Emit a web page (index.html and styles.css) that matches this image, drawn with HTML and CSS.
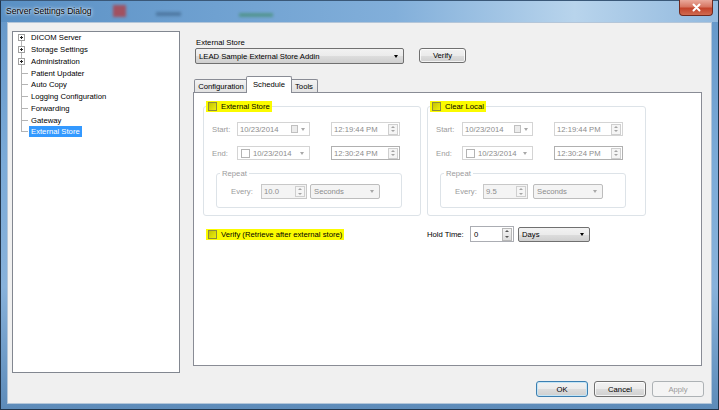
FILE: index.html
```html
<!DOCTYPE html>
<html>
<head>
<meta charset="utf-8">
<title>Server Settings Dialog</title>
<link rel="stylesheet" href="styles.css">
</head>
<body>
<div class="window">
  <div class="titlebar">
    <span class="title">Server Settings Dialog</span>
    <span class="ghost ghost-red"></span>
    <span class="ghost ghost-dark"></span>
    <span class="ghost ghost-green"></span>
    <span class="close"><svg width="11" height="9" viewBox="0 0 11 9"><path d="M2.5 1.5 L8.5 7.5 M8.5 1.5 L2.5 7.5" stroke="#fff" stroke-width="2" stroke-linecap="round"/></svg></span>
  </div>
  <div class="client">
    <div class="main">
      <ul class="tree">
        <li class="node"><span class="twig first"><i class="exp"></i></span><span class="lbl">DICOM Server</span></li>
        <li class="node"><span class="twig"><i class="exp"></i></span><span class="lbl">Storage Settings</span></li>
        <li class="node"><span class="twig"><i class="exp"></i></span><span class="lbl">Administration</span></li>
        <li class="node"><span class="twig leaf"></span><span class="lbl">Patient Updater</span></li>
        <li class="node"><span class="twig leaf"></span><span class="lbl">Auto Copy</span></li>
        <li class="node"><span class="twig leaf"></span><span class="lbl">Logging Configuration</span></li>
        <li class="node"><span class="twig leaf"></span><span class="lbl">Forwarding</span></li>
        <li class="node"><span class="twig leaf"></span><span class="lbl">Gateway</span></li>
        <li class="node"><span class="twig leaf last"></span><span class="lbl selected">External Store</span></li>
      </ul>
      <div class="pane">
        <div class="store-label">External Store</div>
        <div class="store-row">
          <div class="combo combo-store"><span>LEAD Sample External Store Addin</span><i class="arrow"></i></div>
          <div class="btn verify">Verify</div>
        </div>
        <div class="tabs">
          <div class="tab cfg">Configuration</div>
          <div class="tab sel">Schedule</div>
          <div class="tab tools">Tools</div>
        </div>
        <div class="panel">
          <div class="groups">
            <div class="group">
              <div class="legend"><i class="chk"></i><span>External Store</span></div>
              <div class="row">
                <span class="lab">Start:</span>
                <div class="date"><span>10/23/2014</span><i class="cal"></i><i class="arrow gray"></i></div>
                <div class="time"><span>12:19:44 PM</span><span class="spin"><i class="up"></i><i class="dn"></i></span></div>
              </div>
              <div class="row">
                <span class="lab">End:</span>
                <div class="date"><i class="minichk"></i><span class="dtxt">10/23/2014</span><i class="arrow gray"></i></div>
                <div class="time dark"><span>12:30:24 PM</span><span class="spin"><i class="up"></i><i class="dn"></i></span></div>
              </div>
              <div class="repeat">
                <div class="rleg">Repeat</div>
                <div class="every">
                  <span class="elab">Every:</span>
                  <div class="num"><span>10.0</span><span class="spin"><i class="up"></i><i class="dn"></i></span></div>
                  <div class="combo dis"><span>Seconds</span><i class="arrow gray"></i></div>
                </div>
              </div>
            </div>
            <div class="group right">
              <div class="legend"><i class="chk"></i><span>Clear Local</span></div>
              <div class="row">
                <span class="lab">Start:</span>
                <div class="date"><span>10/23/2014</span><i class="cal"></i><i class="arrow gray"></i></div>
                <div class="time"><span>12:19:44 PM</span><span class="spin"><i class="up"></i><i class="dn"></i></span></div>
              </div>
              <div class="row">
                <span class="lab">End:</span>
                <div class="date"><i class="minichk"></i><span class="dtxt">10/23/2014</span><i class="arrow gray"></i></div>
                <div class="time dark"><span>12:30:24 PM</span><span class="spin"><i class="up"></i><i class="dn"></i></span></div>
              </div>
              <div class="repeat">
                <div class="rleg">Repeat</div>
                <div class="every">
                  <span class="elab">Every:</span>
                  <div class="num"><span>9.5</span><span class="spin"><i class="up"></i><i class="dn"></i></span></div>
                  <div class="combo dis"><span>Seconds</span><i class="arrow gray"></i></div>
                </div>
              </div>
            </div>
          </div>
          <div class="bottom">
            <div class="vcell">
              <div class="legend flat"><i class="chk"></i><span>Verify (Retrieve after external store)</span></div>
            </div>
            <span class="hold-lab">Hold Time:</span>
            <div class="hold"><span>0</span><span class="spin en"><i class="up"></i><i class="dn"></i></span></div>
            <div class="combo days"><span>Days</span><i class="arrow"></i></div>
          </div>
        </div>
      </div>
    </div>
    <div class="buttons">
      <div class="btn default">OK</div>
      <div class="btn">Cancel</div>
      <div class="btn disabled">Apply</div>
    </div>
  </div>
</div>
</body>
</html>
```
FILE: styles.css
```css
* { box-sizing: border-box; margin: 0; padding: 0; }
html, body { width: 719px; height: 410px; overflow: hidden; background: #6d98c4; }
body { font-family: "Liberation Sans", Arial, sans-serif; font-size: 7.7px; color: #000; }

.window {
  width: 719px; height: 410px;
  display: flex; flex-direction: column;
  border: 1px solid #22354b; border-top-color: #3a5878;
  background: linear-gradient(180deg, #6496c8 0, #7cabd8 40%, #88b2db 70%, #5d8bb9 100%);
}

/* title bar */
.titlebar {
  height: 21px; flex: none;
  display: flex; align-items: flex-start;
  padding-left: 5px;
  background: linear-gradient(90deg, #5a90c4 0, #6fa1d1 30%, #82afda 55%, #b8d4ec 80%, #92b9de 100%);
}
.title { line-height: 21px; font-size: 8.6px; color: #000; text-shadow: 0 0 4px #fff, 0 0 2px #fff; }
.ghost { display: block; flex: none; filter: blur(1.6px); }
.ghost-red { width: 13px; height: 12px; margin: 4px 0 0 21px; background: #b53a3e; opacity: .75; }
.ghost-dark { width: 25px; height: 4px; margin: 11px 0 0 30px; background: #2e4d6f; opacity: .45; }
.ghost-green { width: 34px; height: 4px; margin: 12px 0 0 58px; background: #3a8a5c; opacity: .55; }
.close {
  margin: -1px 5px 0 auto; width: 34px; height: 16px;
  display: flex; align-items: center; justify-content: center;
  border: 1px solid #70291f; border-top: none; border-radius: 0 0 4px 4px;
  background: linear-gradient(#eaa99c 0, #d77662 45%, #c3432b 55%, #d06b50 100%);
}

/* client area */
.client {
  flex: none; height: 382px; margin: 0 6px;
  background: #f0f0f0; border: 1px solid #b4c6d9;
  padding: 8px 0 0 4px;
  display: flex; flex-direction: column;
}
.main { display: flex; align-items: flex-start; height: 342px; }

/* tree */
.tree { list-style: none; width: 168px; height: 342px; border: 1px solid #828790; background: #fff; }
.node { display: flex; align-items: center; height: 11.75px; }
.twig {
  display: flex; align-items: center; flex: none;
  width: 18px; height: 100%;
  background: linear-gradient(#b4b4b4, #b4b4b4) 8px 0 / 1px 100% no-repeat;
}
.twig.first { background: linear-gradient(#b4b4b4, #b4b4b4) 8px 100% / 1px 50% no-repeat; }
.twig.leaf {
  background:
    linear-gradient(#b4b4b4, #b4b4b4) 8px 0 / 1px 100% no-repeat,
    linear-gradient(#b4b4b4, #b4b4b4) 8px 50% / 7px 1px no-repeat;
}
.twig.leaf.last {
  background:
    linear-gradient(#b4b4b4, #b4b4b4) 8px 0 / 1px 50% no-repeat,
    linear-gradient(#b4b4b4, #b4b4b4) 8px 50% / 7px 1px no-repeat;
}
.exp {
  display: block; width: 7px; height: 7px; margin-left: 5px;
  border: 1px solid #a0a0a0;
  background:
    linear-gradient(#222, #222) center / 3px 1px no-repeat,
    linear-gradient(#222, #222) center / 1px 3px no-repeat,
    #fff;
}
.lbl { line-height: 11px; white-space: nowrap; }
.lbl.selected { background: #3399ff; color: #fff; padding: 0 2px; margin-left: -2px; }

/* right pane */
.pane { margin-left: 13px; width: 509px; }
.store-label { margin-top: 6px; height: 11px; line-height: 11px; padding-left: 3px; }
.store-row { display: flex; height: 16px; }

.combo {
  display: flex; align-items: center;
  height: 16px; padding-left: 3px;
  border: 1px solid #707070; border-radius: 2px;
  background: linear-gradient(#f2f2f2 0, #ebebeb 50%, #dddddd 51%, #cfcfcf 100%);
  white-space: nowrap;
}
.combo-store { margin-left: 2px; width: 209px; }
.arrow {
  display: block; flex: none; margin-left: auto; margin-right: 5px;
  width: 0; height: 0;
  border-left: 2.5px solid transparent; border-right: 2.5px solid transparent;
  border-top: 3px solid #000;
}
.arrow.gray { border-top-color: #a8a8a8; }

.btn {
  display: flex; align-items: center; justify-content: center;
  width: 52px; height: 16px;
  border: 1px solid #707070; border-radius: 3px;
  background: linear-gradient(#f2f2f2 0, #ebebeb 50%, #dddddd 51%, #cfcfcf 100%);
  box-shadow: inset 0 0 0 1px rgba(255,255,255,.75);
}
.btn.verify { margin-left: 15px; width: 47px; height: 15px; }
.btn.default { border-color: #3c7fb1; box-shadow: inset 0 0 0 1px #c4e5f6; }
.btn.disabled { border-color: #adb2b5; background: #f4f4f4; color: #9a9a9a; box-shadow: none; }

/* tabs */
.tabs { display: flex; align-items: flex-end; height: 16px; margin-top: 12px; padding-left: 1px; }
.tab {
  display: flex; align-items: center; justify-content: center;
  height: 13px;
  border: 1px solid #898c95; border-bottom: none; border-radius: 2px 2px 0 0;
  background: linear-gradient(#f3f3f3, #e2e2e2);
}
.tab.cfg { width: 54px; }
.tab.sel {
  width: 46px; height: 17px; margin: 0 -2px -1px -2px;
  background: #fff; position: relative; z-index: 1;
  padding-bottom: 2px;
}
.tab.tools { width: 28px; }

.panel { height: 274px; border: 1px solid #898c95; background: #fff; }
.groups { display: flex; gap: 6px; padding-left: 9px; margin-top: 13px; }
.group { width: 218px; height: 110px; border: 1px solid #dde3e8; border-radius: 3px; }
.group.right { width: 219px; }

.legend {
  display: flex; align-items: center; gap: 4px;
  width: max-content; height: 11px;
  margin: -6px 0 0 2px; padding: 0 2px;
  background: #fbfb00; white-space: nowrap;
}
.legend.flat { margin: 0; }
.chk {
  display: block; width: 9px; height: 9px; flex: none;
  border: 1px solid #8d8b3e;
  background: linear-gradient(135deg, #c4c300, #eeee10);
}

.row { display: flex; align-items: center; height: 14px; padding-left: 8px; margin-top: 10px; }
.lab { width: 25px; color: #9b9b9b; }
.group.right .lab { width: 26px; }
.date {
  display: flex; align-items: center;
  width: 73px; height: 14px; padding-left: 2px;
  border: 1px solid #d4d4d4; background: #fff; color: #8c8c8c;
  white-space: nowrap;
}
.group.right .date { width: 71px; }
.cal { display: block; margin-left: auto; width: 7px; height: 8px; border: 1px solid #c0c0c0; background: #ececec; }
.date .cal + .arrow { margin-left: 3px; margin-right: 4px; }
.minichk { display: block; flex: none; width: 9px; height: 9px; border: 1px solid #b4b4b4; background: #fff; margin-left: 1px; }
.dtxt { margin-left: 3px; }
.time {
  display: flex; align-items: center;
  width: 69px; height: 14px; margin-left: 21px; padding-left: 2px;
  border: 1px solid #d4d4d4; background: #fff; color: #8c8c8c;
  white-space: nowrap;
}
.time.dark { border-color: #b0b0b0; }

.spin {
  display: flex; flex-direction: column; align-items: center; justify-content: space-around;
  margin-left: auto; margin-right: 1px;
  width: 10px; height: 11px;
  border: 1px solid #cfcfcf; background: #f5f5f5;
}
.spin i { display: block; width: 0; height: 0; border-left: 2px solid transparent; border-right: 2px solid transparent; }
.spin .up { border-bottom: 2px solid #a4a4a4; }
.spin .dn { border-top: 2px solid #a4a4a4; }
.spin.en { border-color: #b8b8b8; background: linear-gradient(#f4f4f4, #dedede); height: 13px; }
.spin.en .up { border-bottom-color: #555; }
.spin.en .dn { border-top-color: #555; }

.repeat { margin: 13px 0 0 12px; width: 186px; height: 35px; border: 1px solid #dde3e8; border-radius: 3px; }
.rleg {
  width: max-content; height: 11px; line-height: 11px;
  margin: -6px 0 0 3px; padding: 0 2px;
  background: #fff; color: #9b9b9b;
}
.every { display: flex; align-items: center; height: 15px; margin-top: 5px; padding-left: 14px; }
.elab { width: 30px; color: #9b9b9b; }
.group.right .elab { width: 28px; }
.num {
  display: flex; align-items: center;
  width: 46px; height: 15px; padding-left: 2px;
  border: 1px solid #c8c8c8; background: #f4f4f4; color: #8c8c8c;
}
.group.right .num { width: 45px; }
.combo.dis {
  width: 70px; height: 15px; margin-left: 3px;
  border-color: #bdbdbd; background: #f4f4f4; color: #8c8c8c;
}
.group.right .combo.dis { margin-left: 5px; }

.bottom { display: flex; align-items: center; height: 16px; margin-top: 10px; }
.vcell { width: 233px; padding-left: 12px; }
.hold-lab { width: 43px; white-space: nowrap; }
.hold {
  display: flex; align-items: center;
  width: 44px; height: 16px; padding-left: 3px;
  border: 1px solid #abadb3; background: #fff;
}
.combo.days { width: 72px; height: 15px; margin-left: 4px; }

.buttons { display: flex; justify-content: flex-end; gap: 6px; margin-top: 8px; padding-right: 7px; }
```
